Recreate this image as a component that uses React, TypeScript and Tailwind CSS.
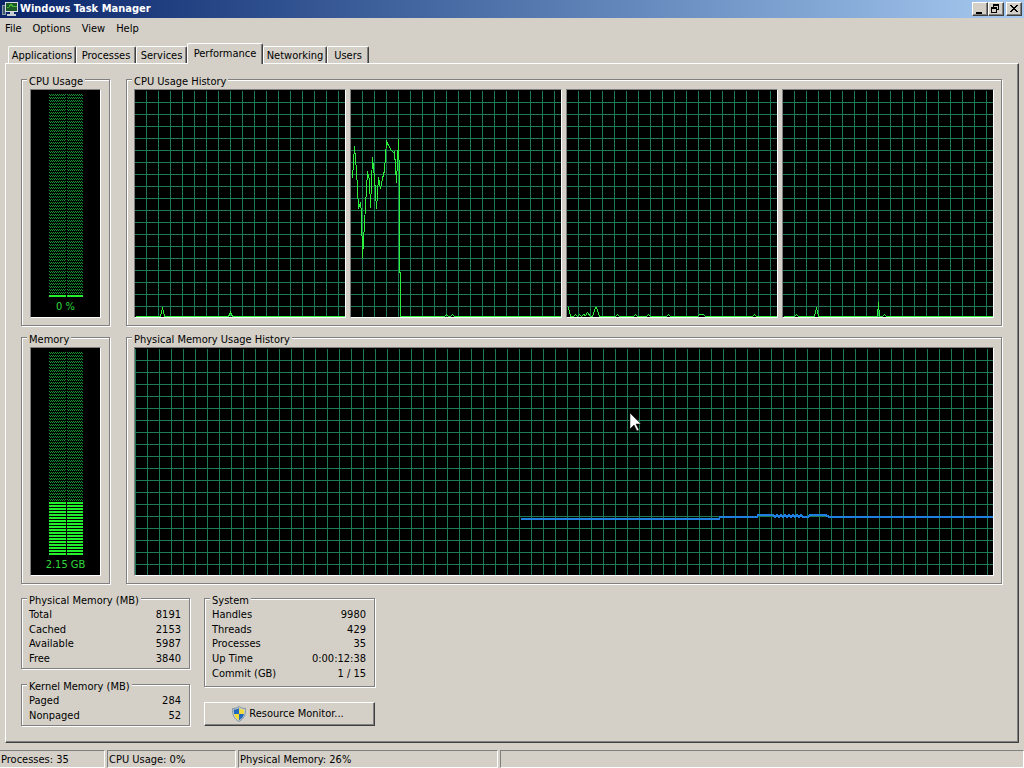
import React from 'react';

const menus = ['File', 'Options', 'View', 'Help'];

const tabs = [
  { name: 'Applications', width: 'w-[68px]' },
  { name: 'Processes', width: 'w-[60px]' },
  { name: 'Services', width: 'w-[51px]' },
  { name: 'Performance', width: 'w-[76px]' },
  { name: 'Networking', width: 'w-[64px]' },
  { name: 'Users', width: 'w-[42px]' },
];

// One trace per core, in chart pixels
const cpuTraces = [
  '0,226 25,226 27,217 29,226 93,226 95,222 97,226 400,226',
  '1,88 3,56 5,80 7,118 9,112 10,123 11,167 13,133 16,81 18,90 19,117 21,67 23,87 25,118 27,87 29,98 31,88 33,80 35,51 37,55 40,60 42,62 43,61 45,92 47,49 48,90 48,182 49,182 49,226 93,226 95,224 97,226 99,226 101,224 103,226 400,226',
  '1,217 3,226 6,226 8,224 10,226 12,224 14,226 16,224 18,225 20,222 23,226 25,226 28,217 29,217 32,226 48,226 50,224 52,226 66,226 68,224 70,226 79,226 81,224 83,226 99,226 101,224 103,226 130,226 132,224 136,224 138,226 185,226 187,224 189,226 400,226',
  '0,226 11,226 13,224 15,226 31,226 33,217 35,226 94,226 95,212 96,226 99,226 101,224 103,226 400,226',
];

const memoryTrace =
  '386,171 584,171 585,169 622,169 623,167 638,167 640,169 642,167 644,169 646,167 648,169 650,167 652,169 654,167 656,169 658,167 660,169 662,167 664,169 666,167 668,169 673,169 675,167 691,167 694,169 2000,169';

const physicalMemory = [
  ['Total', '8191'],
  ['Cached', '2153'],
  ['Available', '5987'],
  ['Free', '3840'],
];

const kernelMemory = [
  ['Paged', '284'],
  ['Nonpaged', '52'],
];

const system = [
  ['Handles', '9980'],
  ['Threads', '429'],
  ['Processes', '35'],
  ['Up Time', '0:00:12:38'],
  ['Commit (GB)', '1 / 15'],
];

const raised =
  'border border-t-white border-l-white border-r-[#404040] border-b-[#404040] bg-[#d4d0c8] shadow-[inset_-1px_-1px_0_#808080]';
const sunken = 'border border-t-[#808080] border-l-[#808080] border-r-white border-b-white';

const Group = ({ title, className = '', children }: { title: string; className?: string; children: React.ReactNode }) => (
  <fieldset
    className={`min-w-0 border border-[#808080] px-[7px] shadow-[1px_1px_0_#fff,inset_1px_1px_0_#fff] ${className}`}
  >
    <legend className="-ml-[2px] h-[17px] bg-[#d4d0c8] px-[2px] pt-1 leading-[14px] whitespace-nowrap">{title}</legend>
    {children}
  </fieldset>
);

const Gauge = ({ id, lit, label }: { id: string; lit: number; label: string }) => (
  <div className={`mx-px mt-px flex h-[229px] flex-col items-center bg-black pt-1 ${sunken}`}>
    <svg width="34" height="204" shapeRendering="crispEdges">
      <defs>
        <pattern id={`${id}-off`} width="2" height="3" patternUnits="userSpaceOnUse">
          <rect x="0" y="0" width="1" height="1" fill="#149a30" />
          <rect x="1" y="1" width="1" height="1" fill="#149a30" />
        </pattern>
        <pattern id={`${id}-on`} width="2" height="3" patternUnits="userSpaceOnUse">
          <rect width="2" height="2" fill="#22f02c" />
        </pattern>
      </defs>
      <rect width="34" height={204 - lit * 3} fill={`url(#${id}-off)`} />
      <rect y={204 - lit * 3} width="34" height={lit * 3} fill={`url(#${id}-on)`} />
      <rect x="17" width="1" height="204" fill="#000" />
    </svg>
    <span className="leading-5 text-[#30d83c]">{label}</span>
  </div>
);

const Chart = ({ id, offset, children }: { id: string; offset: number; children: React.ReactNode }) => (
  <div className={`h-[229px] min-w-0 flex-1 bg-black ${sunken}`}>
    <svg className="block h-full w-full" shapeRendering="crispEdges">
      <defs>
        <pattern id={id} x={offset} width="12" height="12" patternUnits="userSpaceOnUse">
          <path d="M0 0h12v1h-12zM0 1h1v11h-1z" fill="#1c7b54" />
        </pattern>
      </defs>
      {/* The first grid line sits a full cell below the frame */}
      <rect y="1" width="100%" height="100%" fill={`url(#${id})`} />
      {children}
    </svg>
  </div>
);

const Stats = ({ rows, className }: { rows: string[][]; className: string }) => (
  <table className={`w-full ${className}`}>
    <tbody>
      {rows.map(([label, value]) => (
        <tr key={label}>
          <th scope="row" className="p-0 text-left font-normal leading-[14px]">{label}</th>
          <td className="p-0 pr-px text-right leading-[14px]">{value}</td>
        </tr>
      ))}
    </tbody>
  </table>
);

const MonitorIcon = () => (
  <svg width="16" height="16" viewBox="0 0 16 16" shapeRendering="crispEdges">
    <path d="M0 4h4v10H0z" fill="#8d9ba8" />
    <path d="M1 5h2v8H1z" fill="#3c5570" />
    <path d="M3 1h13v10H3z" fill="#d7dde0" />
    <path d="M4 2h11v8H4z" fill="#1d5a26" />
    <path d="M5 7l2-1 2-3 2 3 2-1 2 1" fill="none" stroke="#48b83c" />
    <path d="M8 11h4v2H8zM5 13h9v2H5z" fill="#c5cbd0" />
  </svg>
);

const ShieldIcon = () => (
  <svg width="16" height="16" viewBox="0 0 16 16">
    <path d="M8 .5C6 2 3.500 2.500 1.500 2.500c-.5 5.500 1.500 10.500 6.500 13 5-2.500 7-7.500 6.500-13C12.500 2.500 10 2 8 .5z" fill="#c3ced6" stroke="#8295a3" />
    <path d="M8 2C6.500 3 4.500 3.500 2.800 3.600 2.700 5.200 2.800 6.600 3.100 8H8z" fill="#2468bd" />
    <path d="M8 2c1.500 1 3.500 1.500 5.200 1.600.1 1.600 0 3-.3 4.400H8z" fill="#f2dc3c" />
    <path d="M3.100 8H8v6.200C5.400 12.900 3.700 10.800 3.100 8z" fill="#f2dc3c" />
    <path d="M12.900 8H8v6.200c2.600-1.300 4.300-3.400 4.900-6.200z" fill="#2468bd" />
  </svg>
);

export default function App() {
  return (
    <div className="relative flex min-h-screen cursor-default flex-col bg-[#d4d0c8] font-['DejaVu_Sans_Condensed','DejaVu_Sans',sans-serif] text-[11px] text-black">
      {/* Title bar */}
      <header className="flex h-[18px] items-center bg-linear-to-r from-[#0a246a] to-[#a6caf0] pr-[2px] pl-[2px]">
        <MonitorIcon />
        <h1 className="ml-[2px] flex-1 pt-px font-bold text-white">Windows Task Manager</h1>
        <button type="button" aria-label="Minimize" className={`h-[14px] w-4 ${raised}`}>
          <svg width="14" height="12" shapeRendering="crispEdges">
            <path d="M3 9h6v2H3z" />
          </svg>
        </button>
        <button type="button" aria-label="Restore" className={`h-[14px] w-4 ${raised}`}>
          <svg width="14" height="12" shapeRendering="crispEdges">
            <path d="M4 1h6v6H8V6h1V3H5v1H4z" />
            <path d="M2 4h6v6H2zM3 6v3h4V6z" fillRule="evenodd" />
          </svg>
        </button>
        <button type="button" aria-label="Close" className={`ml-[2px] h-[14px] w-4 ${raised}`}>
          <svg width="14" height="12" shapeRendering="crispEdges">
            <path d="M3 2h2v1h1v1h2V3h1V2h2v1h-1v1H9v1H8v1h1v1h1v1h1v1H9V8H8V7H6v1H5v1H3V8h1V7h1V6h1V5H5V4H4V3H3z" />
          </svg>
        </button>
      </header>

      {/* Menu */}
      <nav className="flex h-[25px] gap-[11px] pt-1 pl-[5px]">
        {menus.map((menu) => (
          <button key={menu} type="button" className="h-[14px] leading-[14px]">{menu}</button>
        ))}
      </nav>

      {/* Tabs */}
      <div role="tablist" className="flex h-5 items-end pl-2">
        {tabs.map(({ name, width }) =>
          name === 'Performance' ? (
            <button
              key={name}
              type="button"
              role="tab"
              aria-selected="true"
              className={`relative -mb-px h-[21px] rounded-t-[2px] border-t border-r border-l border-t-white border-r-[#404040] border-l-white bg-[#d4d0c8] shadow-[inset_-1px_0_0_#808080] ${width}`}
            >
              {name}
            </button>
          ) : (
            <button
              key={name}
              type="button"
              role="tab"
              aria-selected="false"
              className={`h-[17px] rounded-t-[2px] border-t border-r border-l border-t-white border-r-[#404040] border-l-white pt-px shadow-[inset_-1px_0_0_#808080] ${width}`}
            >
              {name}
            </button>
          ),
        )}
      </div>

      <main className={`mr-[5px] mb-[7px] ml-[5px] flex-1 pt-[7px] pr-4 pl-[15px] ${raised}`}>
        {/* Usage history */}
        <div className="flex gap-4">
          <Group title="CPU Usage" className="w-[89px] shrink-0 pb-[7px]">
            <Gauge id="cpu" lit={1} label="0 %" />
          </Group>
          <Group title="CPU Usage History" className="flex-1 pb-[7px]">
            <div className="mt-px flex gap-1">
              {cpuTraces.map((points, i) => (
                <Chart key={i} id={`core-${i}`} offset={11}>
                  <polyline points={points} transform="translate(0.5 0.5)" fill="none" stroke="#2cf03a" />
                </Chart>
              ))}
            </div>
          </Group>
        </div>
        <div className="mt-[3px] flex gap-4">
          <Group title="Memory" className="w-[89px] shrink-0 pb-[7px]">
            <Gauge id="memory" lit={18} label="2.15 GB" />
          </Group>
          <Group title="Physical Memory Usage History" className="flex-1 pb-[7px]">
            <div className="mt-px flex">
              <Chart id="memory-history" offset={12}>
                <polyline points={memoryTrace} fill="none" stroke="#1f7fe0" strokeWidth="2" />
              </Chart>
            </div>
          </Group>
        </div>

        {/* Totals */}
        <div className="mt-[6px] flex items-start gap-[14px]">
          <div className="w-[169px]">
            <Group title="Physical Memory (MB)" className="pt-px pb-[2px]">
              <Stats rows={physicalMemory} className="h-[58px]" />
            </Group>
            <Group title="Kernel Memory (MB)" className="mt-[7px] pt-px pb-[2px]">
              <Stats rows={kernelMemory} className="h-[29px]" />
            </Group>
          </div>
          <div className="w-[171px]">
            <Group title="System" className="pt-px pb-[5px]">
              <Stats rows={system} className="h-[73px]" />
            </Group>
            <button type="button" className={`mt-[15px] flex h-6 w-full items-center justify-center gap-[2px] pr-1 ${raised}`}>
              <ShieldIcon />
              Resource Monitor...
            </button>
          </div>
        </div>
      </main>

      {/* Status bar */}
      <footer className="flex h-[18px] gap-[2px] leading-[18px]">
        <div className={`w-[105px] border-l-0 pl-px ${sunken}`}>Processes: 35</div>
        <div className={`w-[129px] pl-px ${sunken}`}>CPU Usage: 0%</div>
        <div className={`w-[260px] pl-px ${sunken}`}>Physical Memory: 26%</div>
        <div className={`flex-1 ${sunken}`}></div>
      </footer>

      {/* Mouse pointer */}
      <svg className="pointer-events-none absolute top-[412px] left-[629px]" width="13" height="21" viewBox="0 0 13 21">
        <path d="M1 1v16l4-4 3 6 2-1-3-6h5z" fill="#fff" stroke="#000" strokeWidth="0.5" />
      </svg>
    </div>
  );
}
